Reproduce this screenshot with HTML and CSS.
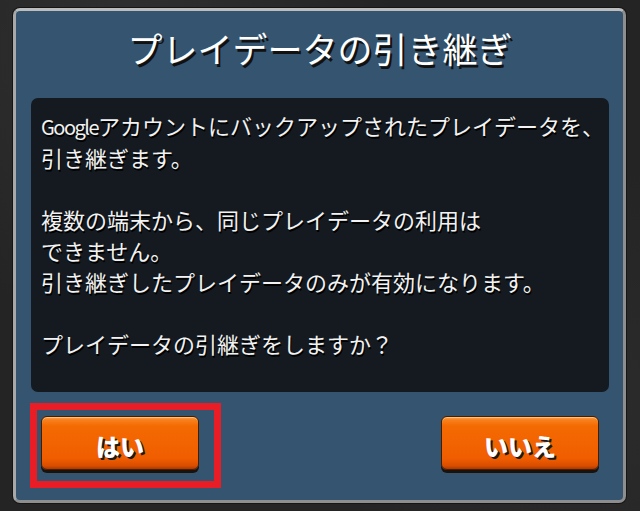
FILE: index.html
```html
<!DOCTYPE html>
<html lang="ja">
<head>
  <meta charset="UTF-8" />
  <meta name="viewport" content="width=device-width, initial-scale=1.0"/>
  <title>プレイデータの引き継ぎ</title>
  <link rel="stylesheet" href="styles.css">
</head>
<body>
  <div class="screen">
    <div class="dialog">
      <h1 class="dialog-title">プレイデータの引き継ぎ</h1>
      <div class="message">
        <p><span class="latin">Google</span>アカウントにバックアップされたプレイデータを、<br>引き継ぎます。</p>
        <p>複数の端末から、同じプレイデータの利用は<br>できません。<br>引き継ぎしたプレイデータのみが有効になります。</p>
        <p>プレイデータの引継ぎをしますか？</p>
      </div>
      <div class="buttons">
        <button class="btn btn-yes">はい<span class="highlight"></span></button>
        <button class="btn">いいえ</button>
      </div>
    </div>
  </div>
</body>
</html>
```

FILE: styles.css
```css
html, body {
  margin: 0;
  padding: 0;
}

body {
  background-color: #242424;
  background-image:
    radial-gradient(circle at 20% 10%, #303030 0, transparent 40%),
    radial-gradient(circle at 90% 80%, #2c2c2c 0, transparent 35%);
  font-family: "Noto Sans CJK JP", "Noto Sans", sans-serif;
}

.screen {
  width: 640px;
  height: 511px;
  box-sizing: border-box;
  padding: 8px 14px 8px 13px;
}

.dialog {
  height: 100%;
  box-sizing: border-box;
  background: #34546f;
  border: 3px solid #8e8e8e;
  border-top-color: #bdbdbd;
  border-left-color: #a8a8a8;
  border-radius: 7px;
  box-shadow: 0 0 0 1px #151515;
  padding: 0 14px 0 15px;
}

.dialog-title {
  margin: 0;
  padding: 19px 0 33px;
  height: 35px;
  line-height: 35px;
  font-size: 35px;
  font-weight: 400;
  color: #fff;
  text-align: center;
  text-shadow: 2px 3px 0 #111;
}

.message {
  height: 294px;
  box-sizing: border-box;
  background: #141a1f;
  border-radius: 7px;
  padding: 12px 10px;
  color: #f2f2f2;
  font-size: 22px;
  line-height: 31px;
  text-shadow: 1px 2px 0 #000;
  white-space: nowrap;
}

.message .latin {
  font-size: 20px;
  letter-spacing: -1.5px;
}

.message p {
  margin: 0 0 31px;
}

.buttons {
  display: flex;
  justify-content: space-between;
  padding: 0 10px;
  margin-top: 24px;
}

.btn {
  position: relative;
  width: 158px;
  height: 54px;
  border: 1px solid #4a1c00;
  border-radius: 6px;
  background: linear-gradient(#ffa456 0, #f8801c 3px, #f46a02 9px, #f05d00 80%, #d94d00 94%, #a83800 100%);
  box-shadow: 0 3px 0 #1a120c, inset 0 1px 0 #ffc07a;
  color: #fff;
  font-family: "Noto Sans CJK JP", sans-serif;
  font-size: 24px;
  font-weight: 900;
  padding: 4px 0 0;
  text-shadow: 2px 2px 0 #1a1a1a;
  cursor: pointer;
}

.highlight {
  position: absolute;
  left: -12px;
  top: -14px;
  right: -23px;
  bottom: -19px;
  border: 7px solid #e91d26;
  pointer-events: none;
}
```
